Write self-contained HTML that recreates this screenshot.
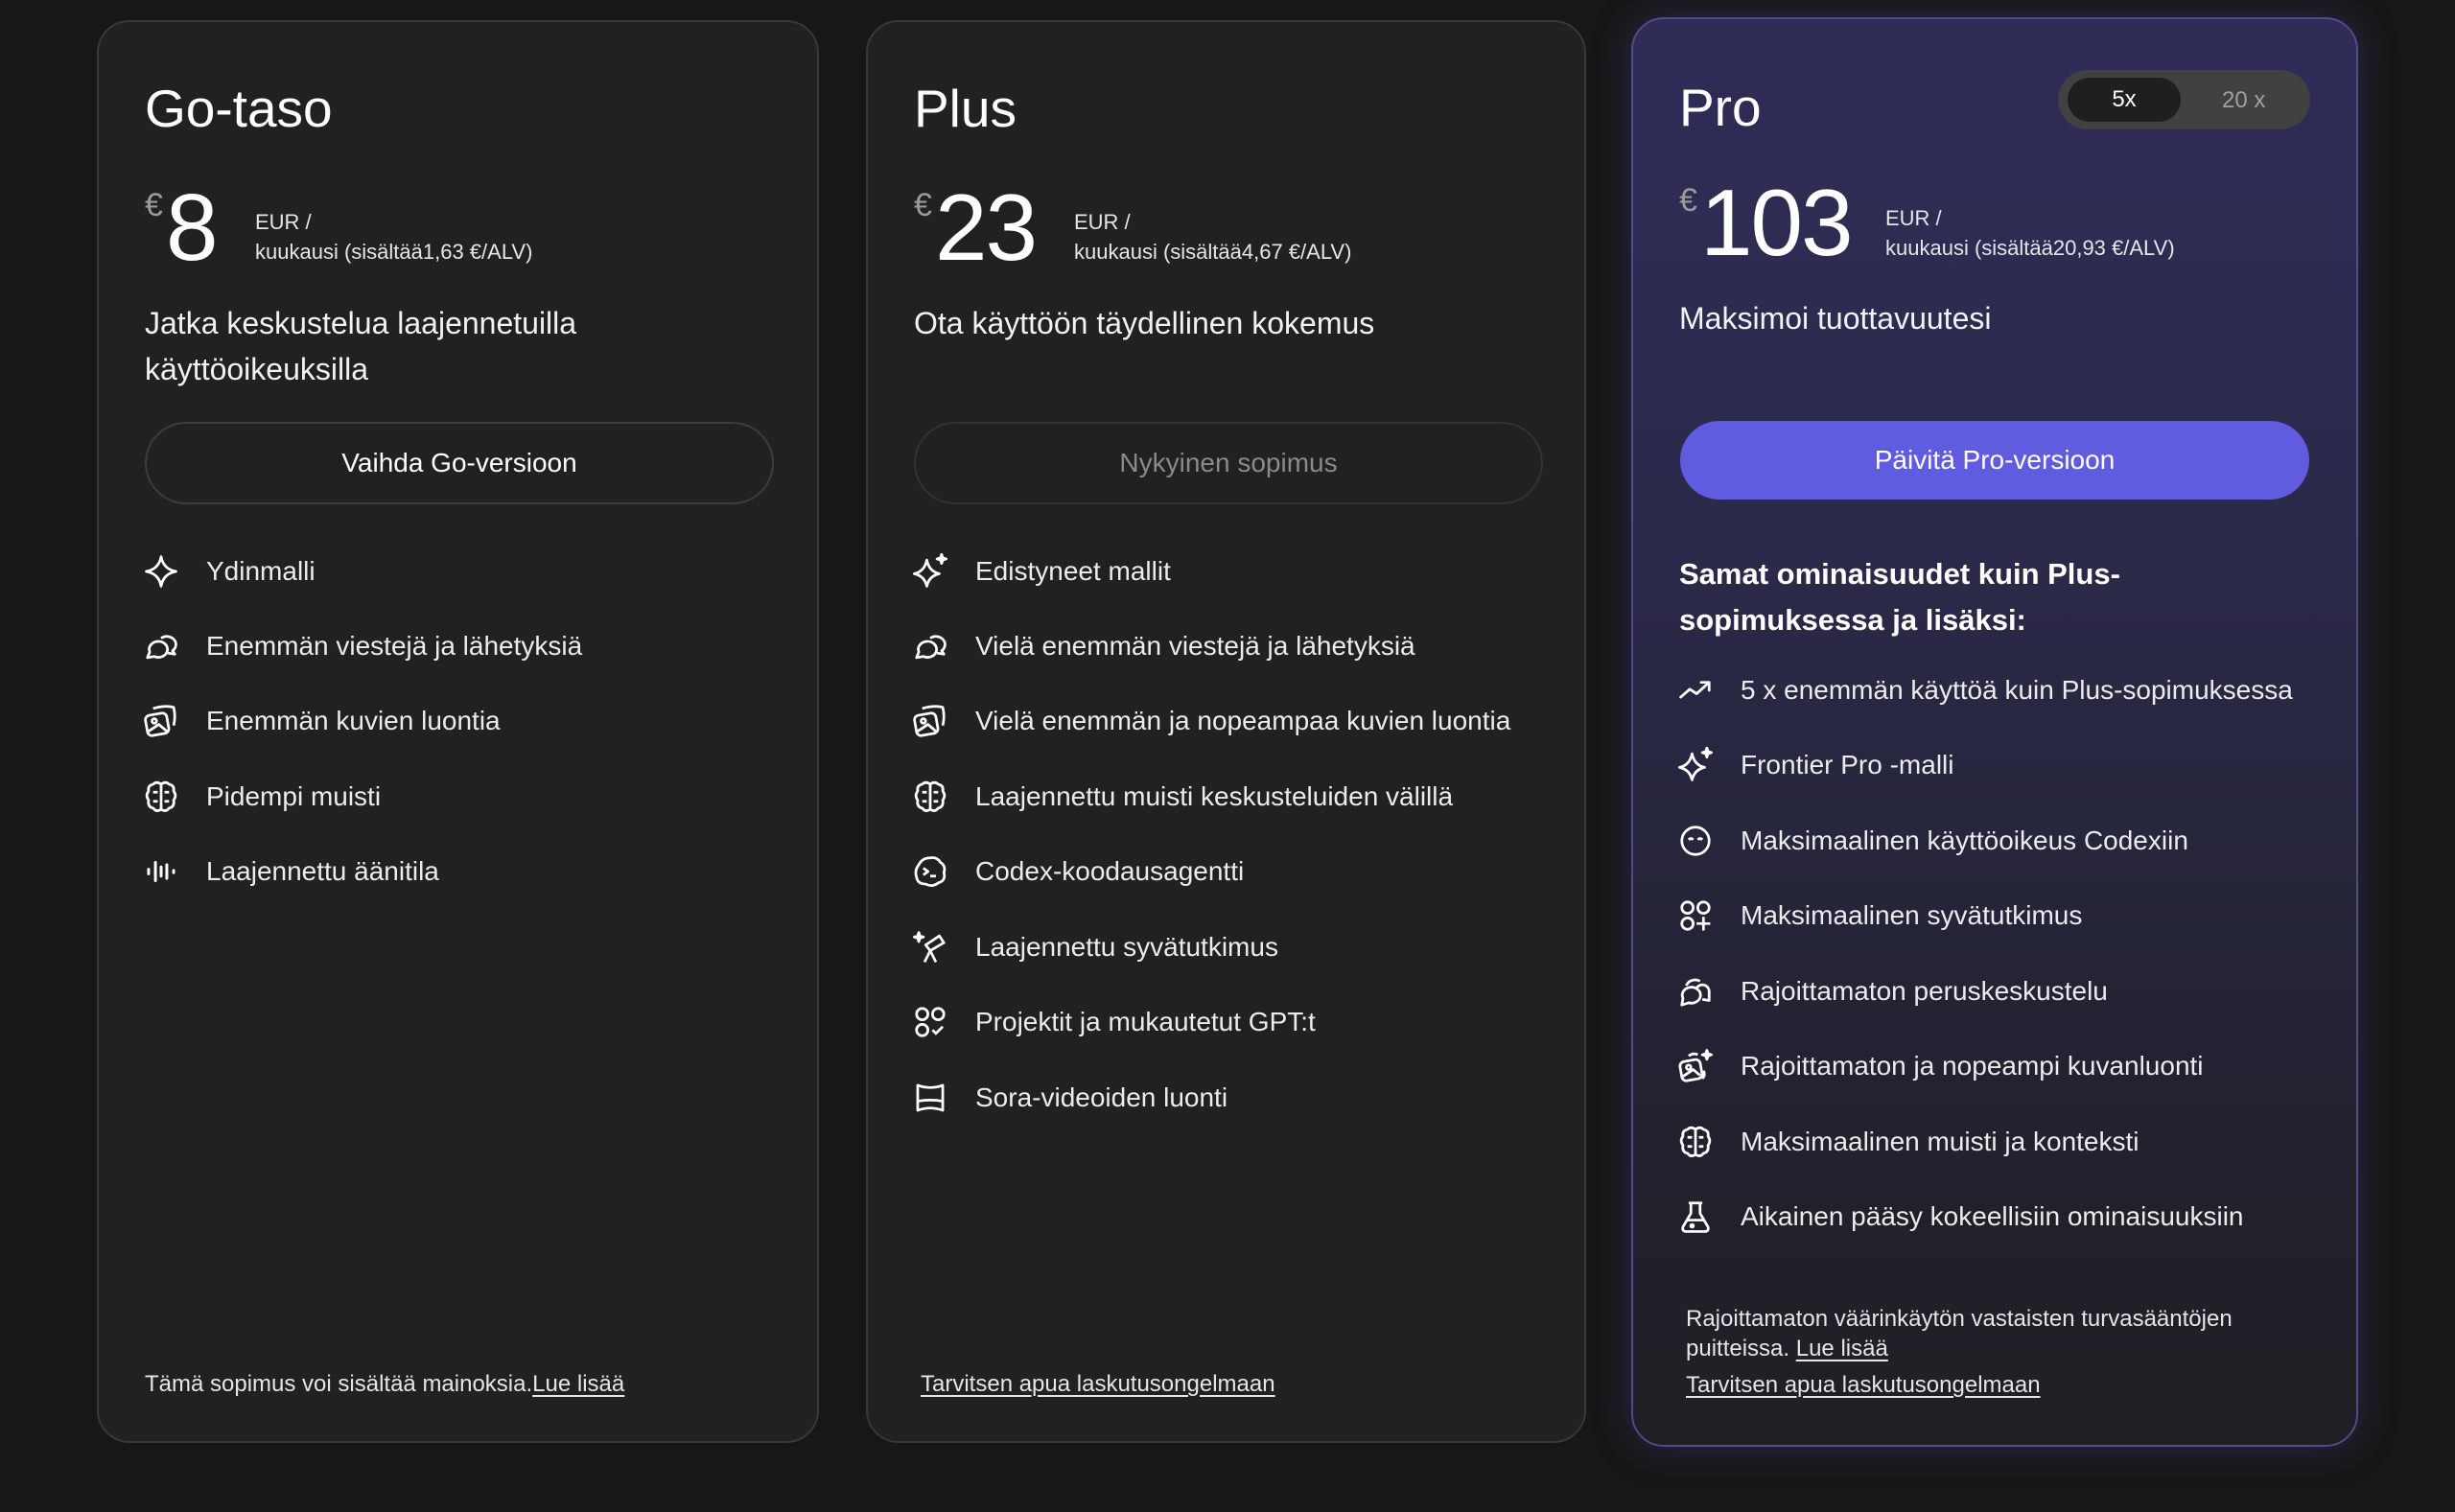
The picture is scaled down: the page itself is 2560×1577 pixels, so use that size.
<!DOCTYPE html>
<html><head><meta charset="utf-8"><style>
*{margin:0;padding:0;box-sizing:border-box}
body{width:2560px;height:1577px;background:#171717;font-family:"Liberation Sans",sans-serif;color:#ececec;position:relative;overflow:hidden}
.card{position:absolute;border-radius:34px;border:2px solid #383838;background:#212121}
.a{position:absolute;white-space:nowrap}
.t{font-size:55px;color:#fff;top:58px;left:48px}
.eu{font-size:34px;color:#9a9a9a;top:172px;left:48px}
.pr{font-size:98px;color:#fff;top:158px;left:70px;letter-spacing:-2px}
.sm{font-size:22px;color:#e6e6e6;line-height:31px;top:193px}
.sub{font-size:32px;line-height:48px;color:#f2f2f2;top:290px;left:48px}
.btn{position:absolute;top:417px;left:48px;width:656px;height:86px;border-radius:43px;border:2px solid #3d3d3d;font-size:28px;display:flex;align-items:center;justify-content:center;color:#fff}
.f{position:absolute;left:48px;font-size:28px;color:#ececec;display:flex;align-items:center;height:40px}
.f svg{width:38px;height:38px;margin-right:28px;margin-left:-2px;flex:none}
.foot{font-size:24px;color:#e6e6e6;line-height:31px}
u{text-decoration-thickness:2px;text-underline-offset:4px}
</style></head><body>
<svg width="0" height="0" style="position:absolute"><defs>
<g id="star" fill="none" stroke="#fff" stroke-width="2.3" stroke-linejoin="round"><path d="M16 3 Q18 14 29 16 Q18 18 16 29 Q14 18 3 16 Q14 14 16 3Z"/></g>
<g id="star2" fill="none" stroke="#fff" stroke-width="2.3" stroke-linejoin="round"><path d="M13 6 Q15 16 24 18 Q15 20 13 29 Q11 20 2 18 Q11 16 13 6Z"/><path d="M26 1 l1 3 3 1 -3 1 -1 3 -1 -3 -3 -1 3 -1z" fill="#fff"/></g>
<g id="chat" fill="none" stroke="#fff" stroke-width="2.3" stroke-linejoin="round"><path d="M4 26 L6 21 A8 7 0 1 1 10 25 Z"/><path d="M16 9 A8 7 0 0 1 29 14 Q29 18 26 20 L28 23 L22 22"/></g>
<g id="img" fill="none" stroke="#fff" stroke-width="2.3" stroke-linejoin="round"><rect x="3" y="10" width="19" height="18" rx="4" transform="rotate(-10 12 19)"/><path d="M9 5 Q20 2 27 4 Q29 12 27 20"/><circle cx="10" cy="16" r="2"/><path d="M5 25 L14 19 L21 25"/></g>
<g id="brain" fill="none" stroke="#fff" stroke-width="2.3" stroke-linejoin="round"><path d="M16 5 Q12 2 9 5 Q4 6 5 11 Q2 15 5 19 Q4 25 9 26 Q12 30 16 27 Z"/><path d="M16 5 Q20 2 23 5 Q28 6 27 11 Q30 15 27 19 Q28 25 23 26 Q20 30 16 27"/><path d="M9 12 h4 M19 12 h4 M9 20 h4 M19 20 h4"/></g>
<g id="wave" fill="none" stroke="#fff" stroke-width="2.5" stroke-linecap="round"><path d="M5 14v4M11 8v16M16 12v8M21 10v12M27 15v2"/></g>
<g id="codex" fill="none" stroke="#fff" stroke-width="2.3" stroke-linejoin="round"><path d="M16 4 Q22 3 25 8 Q30 11 28 17 Q30 24 23 26 Q18 30 12 27 Q5 27 4 21 Q2 15 6 10 Q9 4 16 4Z"/><path d="M10 13 l4 3 -4 3M16 20h5"/></g>
<g id="tele" fill="none" stroke="#fff" stroke-width="2.3" stroke-linejoin="round"><path d="M12 14 L24 6 L28 12 L16 19 Z"/><path d="M16 19 L11 29 M16 19 L21 29"/><path d="M6 3 l1 3 3 1 -3 1 -1 3 -1 -3 -3 -1 3 -1z" fill="#fff"/></g>
<g id="proj" fill="none" stroke="#fff" stroke-width="2.3"><circle cx="9" cy="9" r="5"/><circle cx="23" cy="9" r="5"/><circle cx="9" cy="23" r="5"/><path d="M18 23 l3 3 6 -6"/></g>
<g id="projp" fill="none" stroke="#fff" stroke-width="2.3"><circle cx="9" cy="9" r="5"/><circle cx="23" cy="9" r="5"/><circle cx="9" cy="23" r="5"/><path d="M23 17v12M17 23h12"/></g>
<g id="sora" fill="none" stroke="#fff" stroke-width="2.3" stroke-linejoin="round"><path d="M5 5 Q16 9 27 5 V27 Q16 23 5 27 Z"/><path d="M5 19 Q16 17 27 19"/></g>
<g id="trend" fill="none" stroke="#fff" stroke-width="2.3" stroke-linecap="round" stroke-linejoin="round"><path d="M3 22 L11 15 L17 19 L28 9 M21 9h7v7"/></g>
<g id="smile" fill="none" stroke="#fff" stroke-width="2.3"><circle cx="16" cy="16" r="12"/><path d="M10 15 q2-2 4 0 M18 15 q2-2 4 0"/></g>
<g id="chats" fill="none" stroke="#fff" stroke-width="2.3" stroke-linejoin="round"><path d="M4 28 L5 22 A8 7 0 1 1 10 26 Z"/><path d="M8 11 A8 7 0 0 1 20 7"/><path d="M17 13 A6 6 0 0 1 28 17 L28 24 L22 23"/></g>
<g id="imgs" fill="none" stroke="#fff" stroke-width="2.3" stroke-linejoin="round"><rect x="3" y="11" width="18" height="17" rx="4" transform="rotate(-10 12 19)"/><circle cx="10" cy="17" r="2"/><path d="M5 25 L14 19 L20 24"/><path d="M10 7 Q14 4 18 6 M23 20 Q25 24 22 27"/><path d="M26 2 l1 3 3 1 -3 1 -1 3 -1 -3 -3 -1 3 -1z" fill="#fff"/></g>
<g id="flask" fill="none" stroke="#fff" stroke-width="2.3" stroke-linejoin="round"><path d="M10 4h12M12 4v9 L5 25 Q4 29 8 29 H24 Q28 29 27 25 L20 13 V4"/><circle cx="13" cy="24" r="1.2" fill="#fff"/><path d="M8 19h16"/></g>
</defs></svg>

<!-- Card 1 -->
<div class="card" style="left:101px;top:21px;width:753px;height:1484px">
<div class="a t">Go-taso</div>
<div class="a eu">€</div>
<div class="a pr">8</div>
<div class="a sm" style="left:163px">EUR /<br>kuukausi (sisältää1,63 €/ALV)</div>
<div class="a sub">Jatka keskustelua laajennetuilla<br>käyttöoikeuksilla</div>
<div class="btn">Vaihda Go-versioon</div>
<div class="f" style="top:553px"><svg viewBox="0 0 32 32"><use href="#star"/></svg>Ydinmalli</div>
<div class="f" style="top:631px"><svg viewBox="0 0 32 32"><use href="#chat"/></svg>Enemmän viestejä ja lähetyksiä</div>
<div class="f" style="top:709px"><svg viewBox="0 0 32 32"><use href="#img"/></svg>Enemmän kuvien luontia</div>
<div class="f" style="top:788px"><svg viewBox="0 0 32 32"><use href="#brain"/></svg>Pidempi muisti</div>
<div class="f" style="top:866px"><svg viewBox="0 0 32 32"><use href="#wave"/></svg>Laajennettu äänitila</div>
<div class="a foot" style="left:48px;top:1405px">Tämä sopimus voi sisältää mainoksia.<u>Lue lisää</u></div>
</div>

<!-- Card 2 -->
<div class="card" style="left:903px;top:21px;width:751px;height:1484px">
<div class="a t">Plus</div>
<div class="a eu">€</div>
<div class="a pr">23</div>
<div class="a sm" style="left:215px">EUR /<br>kuukausi (sisältää4,67 €/ALV)</div>
<div class="a sub">Ota käyttöön täydellinen kokemus</div>
<div class="btn" style="color:#8a8a8a;border-color:#333">Nykyinen sopimus</div>
<div class="f" style="top:553px"><svg viewBox="0 0 32 32"><use href="#star2"/></svg>Edistyneet mallit</div>
<div class="f" style="top:631px"><svg viewBox="0 0 32 32"><use href="#chat"/></svg>Vielä enemmän viestejä ja lähetyksiä</div>
<div class="f" style="top:709px"><svg viewBox="0 0 32 32"><use href="#img"/></svg>Vielä enemmän ja nopeampaa kuvien luontia</div>
<div class="f" style="top:788px"><svg viewBox="0 0 32 32"><use href="#brain"/></svg>Laajennettu muisti keskusteluiden välillä</div>
<div class="f" style="top:866px"><svg viewBox="0 0 32 32"><use href="#codex"/></svg>Codex-koodausagentti</div>
<div class="f" style="top:945px"><svg viewBox="0 0 32 32"><use href="#tele"/></svg>Laajennettu syvätutkimus</div>
<div class="f" style="top:1023px"><svg viewBox="0 0 32 32"><use href="#proj"/></svg>Projektit ja mukautetut GPT:t</div>
<div class="f" style="top:1102px"><svg viewBox="0 0 32 32"><use href="#sora"/></svg>Sora-videoiden luonti</div>
<div class="a foot" style="left:55px;top:1405px"><u>Tarvitsen apua laskutusongelmaan</u></div>
</div>

<!-- Card 3 -->
<div class="card" style="left:1701px;top:18px;width:758px;height:1491px;border-color:#4f4c8a;background:linear-gradient(180deg,#2f2d58 0%,#2a2948 40%,#222230 75%,#1f1f24 100%);box-shadow:0 0 40px rgba(80,70,170,0.35)">
<div class="a t" style="top:60px">Pro</div>
<div class="a" style="left:443px;top:53px;width:263px;height:62px;border-radius:31px;background:#414141"></div>
<div class="a" style="left:453px;top:61px;width:118px;height:46px;border-radius:23px;background:#1f1f1f;color:#fff;font-size:24px;display:flex;align-items:center;justify-content:center">5x</div>
<div class="a" style="left:614px;top:71px;color:#a0a0a0;font-size:24px">20 x</div>
<div class="a eu" style="top:170px">€</div>
<div class="a pr" style="top:156px">103</div>
<div class="a sm" style="left:263px;top:192px">EUR /<br>kuukausi (sisältää20,93 €/ALV)</div>
<div class="a sub" style="top:288px">Maksimoi tuottavuutesi</div>
<div class="btn" style="top:419px;height:82px;border:none;background:#5f5ce0;left:49px">Päivitä Pro-versioon</div>
<div class="a" style="left:48px;top:555px;font-size:31px;font-weight:bold;line-height:48px;color:#fff">Samat ominaisuudet kuin Plus-<br>sopimuksessa ja lisäksi:</div>
<div class="f" style="top:680px"><svg viewBox="0 0 32 32"><use href="#trend"/></svg>5 x enemmän käyttöä kuin Plus-sopimuksessa</div>
<div class="f" style="top:758px"><svg viewBox="0 0 32 32"><use href="#star2"/></svg>Frontier Pro -malli</div>
<div class="f" style="top:837px"><svg viewBox="0 0 32 32"><use href="#smile"/></svg>Maksimaalinen käyttöoikeus Codexiin</div>
<div class="f" style="top:915px"><svg viewBox="0 0 32 32"><use href="#projp"/></svg>Maksimaalinen syvätutkimus</div>
<div class="f" style="top:994px"><svg viewBox="0 0 32 32"><use href="#chats"/></svg>Rajoittamaton peruskeskustelu</div>
<div class="f" style="top:1072px"><svg viewBox="0 0 32 32"><use href="#imgs"/></svg>Rajoittamaton ja nopeampi kuvanluonti</div>
<div class="f" style="top:1151px"><svg viewBox="0 0 32 32"><use href="#brain"/></svg>Maksimaalinen muisti ja konteksti</div>
<div class="f" style="top:1229px"><svg viewBox="0 0 32 32"><use href="#flask"/></svg>Aikainen pääsy kokeellisiin ominaisuuksiin</div>
<div class="a foot" style="left:55px;top:1340px">Rajoittamaton väärinkäytön vastaisten turvasääntöjen<br>puitteissa. <u>Lue lisää</u></div>
<div class="a foot" style="left:55px;top:1409px"><u>Tarvitsen apua laskutusongelmaan</u></div>
</div>
</body></html>
